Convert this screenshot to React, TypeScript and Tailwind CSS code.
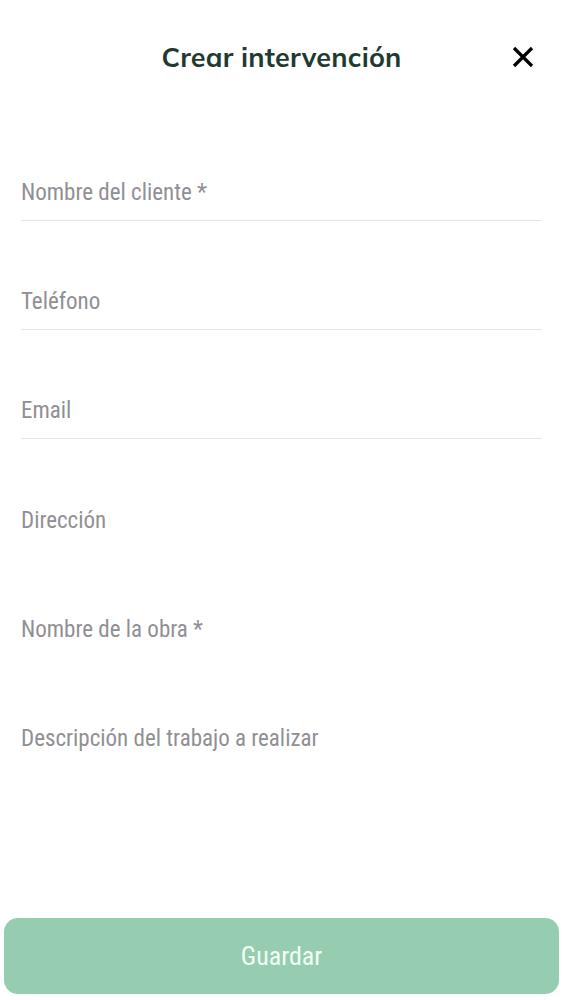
import React from "react";

const fields = [
  { label: "Nombre del cliente *", line: true },
  { label: "Teléfono", line: true },
  { label: "Email", line: true },
  { label: "Dirección", line: false },
  { label: "Nombre de la obra *", line: false },
  { label: "Descripción del trabajo a realizar", line: false },
];

export default function App() {
  return (
    <div className="w-[563px] h-[1000px] bg-white flex flex-col relative overflow-hidden">
      <div className="h-[112px] flex items-start pt-[39px] relative">
        <div
          className="w-full text-center text-[27px] font-bold text-[#1f3a31] tracking-[0.2px] leading-[36px]"
          style={{ fontFamily: "Mulish, Lato, 'Open Sans', sans-serif" }}
        >
          Crear intervención
        </div>
        <svg
          className="absolute left-[512px] top-[46px]"
          width="22"
          height="22"
          viewBox="0 0 22 22"
        >
          <path d="M2 2 L20 20 M20 2 L2 20" stroke="#000" strokeWidth="3.2" strokeLinecap="butt" />
        </svg>
      </div>
      <div className="flex flex-col px-[21px]">
        {fields.map((f) => (
          <div key={f.label} className={`h-[109px] flex flex-col justify-end ${f.line ? "border-b border-[#e6e6e6]" : ""}`}>
            <div
              className="text-[23px] text-[#8f8f94] pb-[13px] leading-[28px]"
              style={{ fontFamily: "'Roboto Condensed', Roboto, sans-serif", fontStretch: "condensed" }}
            >
              {f.label}
            </div>
          </div>
        ))}
      </div>
      <div className="flex-1" />
      <div className="px-[4px] pb-[6px]">
        <button
          className="w-full h-[76px] rounded-[14px] bg-[#96cdb0] text-[#f2fff7] text-[26px]"
          style={{ fontFamily: "'Roboto Condensed', Roboto, sans-serif", fontStretch: "condensed" }}
        >
          Guardar
        </button>
      </div>
    </div>
  );
}
